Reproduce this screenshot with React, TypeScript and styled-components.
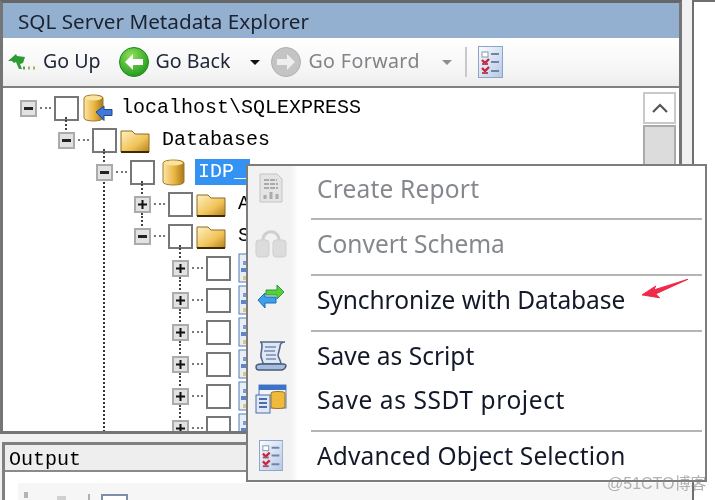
import React from "react";
import styled, { createGlobalStyle } from "styled-components";

const Global = createGlobalStyle`
  html, body { margin: 0; padding: 0; background: #f1f1f1; }
  #root { width: 715px; height: 500px; overflow: hidden; }
`;

const Page = styled.div`
  position: relative;
  width: 715px;
  height: 500px;
  overflow: hidden;
  display: flex;
  background: #f1f1f1;
  filter: blur(0.35px);
`;
const LeftColumn = styled.div`
  width: 682px;
  height: 500px;
  flex: none;
  display: flex;
  flex-direction: column;
`;
const RightPane = styled.div`
  margin-left: 10px;
  flex: 1;
  background: #fff;
  border-left: 2px solid #6f6f6f;
  border-top: 2px solid #6f6f6f;
`;
const ExplorerPanel = styled.section`
  height: 434px;
  box-sizing: border-box;
  flex: none;
  display: flex;
  flex-direction: column;
  border: 3px solid #757575;
  border-top-color: #666;
  overflow: hidden;
`;
const TitleBar = styled.header`
  height: 35px;
  flex: none;
  background: #94b0d0;
  display: flex;
  align-items: center;
  padding-left: 15px;
  font: 20.7px "Noto Sans", sans-serif;
  color: #1b2230;
`;
const Toolbar = styled.div`
  height: 50px;
  flex: none;
  box-sizing: border-box;
  display: flex;
  align-items: center;
  padding-left: 5px;
  background: linear-gradient(#ffffff, #f5f5f5 70%, #ececec);
  border-bottom: 2px solid #808080;
  font: 19.6px "Noto Sans", sans-serif;
`;
const ToolItem = styled.span<{ $off?: boolean; $gap: number; $ml?: number }>`
  display: inline-flex;
  align-items: center;
  gap: ${(p) => p.$gap}px;
  margin-left: ${(p) => p.$ml ?? 0}px;
  color: ${(p) => (p.$off ? "#808488" : "#20283a")};
  letter-spacing: ${(p) => (p.$off ? "0.4px" : "0")};
`;
const ToolLabel = styled.span`
  padding-bottom: 4px;
`;
const Caret = styled.i<{ $off?: boolean; $ml: number }>`
  width: 0;
  height: 0;
  margin-left: ${(p) => p.$ml}px;
  border-left: 5px solid transparent;
  border-right: 5px solid transparent;
  border-top: 5px solid ${(p) => (p.$off ? "#8a8f95" : "#111")};
`;
const ToolSep = styled.i`
  width: 2px;
  height: 30px;
  margin-left: 13px;
  margin-right: 11px;
  background: #c9c9c9;
`;
const TreeArea = styled.div`
  flex: 1;
  min-height: 0;
  display: flex;
  background: #fff;
  overflow: hidden;
`;
const Tree = styled.div`
  flex: 1;
  padding-top: 4px;
  overflow: hidden;
  position: relative;
`;
const Row = styled.div<{ $level: number }>`
  height: 32px;
  box-sizing: border-box;
  display: flex;
  align-items: center;
  padding-left: ${(p) => 17 + p.$level * 38}px;
`;
const Expander = styled.span<{ $line: number; $top?: boolean }>`
  position: relative;
  width: 17px;
  height: 17px;
  box-sizing: border-box;
  flex: none;
  background: #e2e2e2;
  border: 2px solid #ababab;
  display: flex;
  align-items: center;
  justify-content: center;
  &::before {
    content: "";
    display: ${(p) => (p.$top ? "block" : "none")};
    position: absolute;
    left: 5px;
    bottom: 17px;
    height: 13px;
    border-left: 2px dotted #444;
  }
  &::after {
    content: "";
    display: ${(p) => (p.$line ? "block" : "none")};
    position: absolute;
    left: 5px;
    top: 16px;
    height: ${(p) => p.$line}px;
    border-left: 2px dotted #333;
  }
`;
const Dots = styled.i`
  width: 11px;
  margin: 0 3px;
  flex: none;
  border-top: 2px dotted #777;
`;
const Check = styled.span`
  width: 25px;
  height: 25px;
  box-sizing: border-box;
  flex: none;
  background: #fff;
  border: 2px solid #777;
`;
const IconSlot = styled.span<{ $w: number; $ml: number }>`
  display: inline-flex;
  flex: none;
  width: ${(p) => p.$w}px;
  margin-left: ${(p) => p.$ml}px;
`;
const NodeLabel = styled.span<{ $selected?: boolean; $ml: number }>`
  margin-left: ${(p) => p.$ml}px;
  font: 20px/24px "Liberation Mono", monospace;
  color: ${(p) => (p.$selected ? "#fff" : "#000")};
  background: ${(p) => (p.$selected ? "#3492f2" : "transparent")};
  padding: ${(p) => (p.$selected ? "1px 4px 1px 3px" : "0")};
  white-space: pre;
`;
const Scrollbar = styled.div`
  width: 33px;
  flex: none;
  margin: 4px 3px 0 0;
  display: flex;
  flex-direction: column;
  gap: 1px;
`;
const ScrollUp = styled.div`
  height: 32px;
  box-sizing: border-box;
  background: #fff;
  border: 2px solid #c9c9c9;
  display: flex;
  align-items: center;
  justify-content: center;
`;
const ScrollThumb = styled.div`
  flex: 1;
  background: #dcdcdc;
  border: 2px solid #aaa;
  border-bottom: 0;
`;
const OutputPanel = styled.section`
  margin-top: 8px;
  flex: 1;
  margin-left: 2px;
  margin-right: -40px;
  border-top: 3px solid #808080;
  border-left: 3px solid #808080;
  display: flex;
  flex-direction: column;
  background: #fff;
`;
const OutputTitle = styled.div`
  height: 27px;
  box-sizing: border-box;
  flex: none;
  background: #eeeeee;
  border-bottom: 2px solid #8a8a8a;
  padding: 2px 0 0 4px;
  font: 20px/26px "Liberation Mono", monospace;
  color: #000;
`;
const OutputBody = styled.div`
  flex: 1;
  background: #fff;
  padding: 11px 0 0 13px;
  display: flex;
`;
const OutputStrip = styled.div`
  flex: 1;
  background: #f6f6f6;
  padding-left: 6px;
  display: flex;
  align-items: flex-start;
`;
const OutputSpeck = styled.i<{ $w: number; $ml: number; $top: number; $c: string }>`
  width: ${(p) => p.$w}px;
  height: 6px;
  margin: ${(p) => p.$top}px 0 0 ${(p) => p.$ml}px;
  background: ${(p) => p.$c};
  flex: none;
`;
const OutputBox = styled.i`
  width: 23px;
  height: 8px;
  margin: 11px 0 0 11px;
  flex: none;
  border: 2px solid #7f8fa8;
  border-bottom: 0;
  background: #fff;
`;
const Menu = styled.div`
  position: absolute;
  left: 246px;
  top: 164px;
  width: 461px;
  height: 318px;
  box-sizing: border-box;
  border: 2px solid #7c7c7c;
  background: linear-gradient(90deg, #f2f2f2 0, #f2f2f2 42px, #fff 50px);
  display: flex;
  flex-direction: column;
  font: 24.5px "Noto Sans", sans-serif;
`;
const MenuItem = styled.div<{ $h: number; $off?: boolean; $lift: number }>`
  height: ${(p) => p.$h}px;
  box-sizing: border-box;
  padding-bottom: ${(p) => p.$lift}px;
  flex: none;
  display: flex;
  align-items: center;
  color: ${(p) => (p.$off ? "#85898d" : "#14192a")};
  white-space: nowrap;
`;
const MenuIcon = styled.span`
  width: 46px;
  flex: none;
  display: flex;
  justify-content: center;
`;
const MenuText = styled.span<{ $track?: number }>`
  margin-left: 23px;
  letter-spacing: ${(p) => p.$track ?? 0}px;
`;
const MenuSep = styled.hr`
  margin: 0 3px 0 63px;
  border: 0;
  height: 2px;
  flex: none;
  background: #b4b4b4;
`;
const RedArrow = styled.svg`
  margin: 0 0 20px 17px;
  flex: none;
`;
const Watermark = styled.div`
  position: absolute;
  left: 607px;
  top: 470px;
  font: 16px "Liberation Sans", "Noto Sans CJK SC", sans-serif;
  color: rgba(130, 130, 130, 0.62);
  white-space: nowrap;
`;

const Minus = () => (
  <svg width="11" height="11" viewBox="0 0 11 11"><rect x="1" y="4" width="9" height="3" fill="#222" /></svg>
);
const Plus = () => (
  <svg width="11" height="11" viewBox="0 0 11 11"><path d="M1 4.5h3.5V1h2v3.5H10v2H6.5V10h-2V6.5H1z" fill="#111" /></svg>
);
const CylinderGradient = () => (
  <defs>
    <linearGradient id="cy" x1="0" x2="1" y1="0" y2="0">
      <stop offset="0" stopColor="#fbe6a8" />
      <stop offset=".55" stopColor="#e8b440" />
      <stop offset="1" stopColor="#a8781a" />
    </linearGradient>
  </defs>
);
const Server = () => (
  <svg width="30" height="28" viewBox="0 0 30 28">
    <CylinderGradient />
    <path d="M1 4c0-4 19-4 19 0v20c0 4-19 4-19 0z" fill="url(#cy)" stroke="#a27a26" />
    <ellipse cx="10.5" cy="4" rx="8.5" ry="2.6" fill="#f8e3a0" />
    <path d="M13 18l8-6v3.5h8v6h-8v5z" fill="#3f79d8" stroke="#23468c" />
  </svg>
);
const Database = () => (
  <svg width="23" height="27" viewBox="0 0 23 27">
    <CylinderGradient />
    <path d="M1 4c0-4 21-4 21 0v19c0 4-21 4-21 0z" fill="url(#cy)" stroke="#a27a26" />
    <ellipse cx="11.5" cy="4" rx="9.5" ry="2.6" fill="#f8e3a0" />
  </svg>
);
const Folder = () => (
  <svg width="30" height="25" viewBox="0 0 30 25">
    <defs>
      <linearGradient id="fo" x1="0" x2="1" y1="0" y2="1">
        <stop offset="0" stopColor="#fff0c0" />
        <stop offset=".6" stopColor="#f0c358" />
        <stop offset="1" stopColor="#b5801c" />
      </linearGradient>
    </defs>
    <path d="M1 3h11l3 3h14v18H1z" fill="url(#fo)" stroke="#8f6a1e" />
    <path d="M1 24h28" stroke="#3a2a08" strokeWidth="2" />
  </svg>
);
const TableIcon = () => (
  <svg width="26" height="30" viewBox="0 0 26 30">
    <rect x="1" y="1" width="24" height="28" fill="#e8eef8" stroke="#5578b8" />
    <rect x="5" y="8" width="18" height="4" fill="#7c9ad4" />
    <rect x="3" y="15" width="18" height="4" fill="#5f85c6" />
    <rect x="5" y="23" width="18" height="4" fill="#d8c878" />
  </svg>
);
const UpArrow = () => (
  <svg width="29" height="18" viewBox="0 0 29 18">
    <path d="M0 8l8-7 1 2 8 1-2 6-3 1 2 5h-3l-3-7-2 1-2-2z" fill="#2c9c30" />
    <path d="M15 15h2" stroke="#5b9c3c" strokeWidth="3" />
    <path d="M20 15h2M25 15h2" stroke="#9ab860" strokeWidth="3" />
  </svg>
);
const Circle = ({ dir, off }: { dir: "l" | "r"; off?: boolean }) => (
  <svg width="30" height="30" viewBox="0 0 30 30">
    <defs>
      <radialGradient id="gr" cx=".4" cy=".3" r=".8">
        <stop offset="0" stopColor="#8fe05a" />
        <stop offset="1" stopColor="#169316" />
      </radialGradient>
    </defs>
    <circle cx="15" cy="15" r="14.5" fill={off ? "#c4c4c4" : "url(#gr)"} stroke={off ? "#b0b0b0" : "#1a8a1a"} />
    <path
      d={dir === "l" ? "M6 15l8-8v5h10v6H14v5z" : "M24 15l-8-8v5H6v6h10v5z"}
      fill={off ? "#eee" : "#fff"}
    />
  </svg>
);
const CheckList = ({ h = 32 }: { h?: number }) => (
  <svg width={(h * 25) / 32} height={h} viewBox="0 0 25 32">
    <defs>
      <linearGradient id="cl" x1="0" x2="1" y1="0" y2="1">
        <stop offset="0" stopColor="#fafcff" />
        <stop offset="1" stopColor="#b6c8e6" />
      </linearGradient>
    </defs>
    <rect x=".5" y=".5" width="24" height="31" fill="url(#cl)" stroke="#8ea4c6" />
    <rect x="4" y="6" width="6" height="5" fill="#fff" stroke="#8899aa" />
    <path d="M13 8h8M13 16h8M13 25h8" stroke="#6d86a8" strokeWidth="2" />
    <path d="M4 14l3 3 4-4M4 22l3 3 4-4" stroke="#c8243c" strokeWidth="2.4" fill="none" />
    <rect x="4" y="17" width="6" height="2" fill="#b14c60" />
    <rect x="4" y="26" width="6" height="2" fill="#b14c60" />
  </svg>
);
const ReportIcon = () => (
  <svg width="24" height="30" viewBox="0 0 24 30">
    <path d="M1 1h17l5 5v23H1z" fill="#e4e4e4" stroke="#c4c4c4" />
    <path d="M5 7h13M5 11h14M5 15h14" stroke="#aaa" strokeWidth="2" strokeDasharray="5 1" />
    <path d="M6 26v-4M12 26v-7M18 26v-5" stroke="#aaa" strokeWidth="3" />
  </svg>
);
const SchemaIcon = () => (
  <svg width="32" height="30" viewBox="0 0 32 30">
    <path d="M8 12C8 1 24 1 24 12" fill="none" stroke="#cfcfcf" strokeWidth="3" />
    <rect x="1" y="12" width="13" height="17" rx="3" fill="#dcdcdc" stroke="#cfcfcf" />
    <rect x="18" y="12" width="13" height="17" rx="3" fill="#dcdcdc" stroke="#cfcfcf" />
  </svg>
);
const SyncIcon = () => (
  <svg width="28" height="28" viewBox="0 0 28 28">
    <path d="M9 5h11V0l7 7-7 7v-4H9z" fill="#55cf3a" stroke="#2f9a3a" />
    <path d="M19 12H8V8l-7 7 7 8v-5h11z" fill="#3da0e8" stroke="#1c6cb4" />
  </svg>
);
const ScrollIcon = () => (
  <svg width="32" height="32" viewBox="0 0 32 32">
    <path d="M5 3h25c-3 0-5 2-5 5l-2 8c0 3 3 5 3 9H8c0-4-3-6-2-10l1-7c0-3 0-5-2-5z" fill="#dfe7f4" stroke="#56698c" strokeWidth="1.6" />
    <path d="M10 8h11M9 12h11M11 16h10M11 20h10" stroke="#8ea2c4" strokeWidth="2" />
    <path d="M1 28c0-2 2-3 5-3h22c2 0 3 1 3 2-1 3-3 4-5 4H4c-2 0-3-1-3-3z" fill="#a6bedd" stroke="#47597a" strokeWidth="1.4" />
  </svg>
);
const SsdtIcon = () => (
  <svg width="32" height="30" viewBox="0 0 32 30">
    <rect x="4" y="1" width="27" height="23" fill="#f2f4fa" stroke="#5b7bb8" />
    <rect x="4" y="1" width="27" height="5" fill="#3c72c8" />
    <path d="M16 9c0-2 14-2 14 0v14c0 2-14 2-14 0z" fill="#efb93c" stroke="#9a7418" />
    <rect x="1" y="11" width="14" height="18" fill="#dfe8f6" stroke="#4d6da6" />
    <path d="M4 15h8M4 19h8M4 23h8" stroke="#4d6da6" strokeWidth="2" />
  </svg>
);

type Node = {
  level: number;
  open: boolean;
  label?: string;
  selected?: boolean;
  icon: "server" | "db" | "folder" | "table";
  line?: number;
};
const nodes: Node[] = [
  { level: 0, open: true, icon: "server", label: "localhost\\SQLEXPRESS" },
  { level: 1, open: true, icon: "folder", label: "Databases" },
  { level: 2, open: true, icon: "db", label: "IDP_", selected: true, line: 270 },
  { level: 3, open: false, icon: "folder", label: "A" },
  { level: 3, open: true, icon: "folder", label: "S" },
  { level: 4, open: false, icon: "table" },
  { level: 4, open: false, icon: "table" },
  { level: 4, open: false, icon: "table" },
  { level: 4, open: false, icon: "table" },
  { level: 4, open: false, icon: "table" },
  { level: 4, open: false, icon: "table" },
];

const TreeNode = ({ n }: { n: Node }) => (
  <Row $level={n.level}>
    <Expander $line={n.line ?? 0} $top={n.level > 0}>
      {n.open ? <Minus /> : <Plus />}
    </Expander>
    <Dots />
    <Check />
    {n.icon === "server" && <IconSlot $w={30} $ml={4}><Server /></IconSlot>}
    {n.icon === "db" && <IconSlot $w={23} $ml={7}><Database /></IconSlot>}
    {n.icon === "folder" && <IconSlot $w={30} $ml={3}><Folder /></IconSlot>}
    {n.icon === "table" && <IconSlot $w={26} $ml={7}><TableIcon /></IconSlot>}
    {n.label && (
      <NodeLabel $selected={n.selected} $ml={n.selected ? 10 : n.icon === "server" ? 8 : 12}>
        {n.label}
      </NodeLabel>
    )}
  </Row>
);

export default function App() {
  return (
    <>
      <Global />
      <Page>
        <LeftColumn>
          <ExplorerPanel>
            <TitleBar>SQL Server Metadata Explorer</TitleBar>
            <Toolbar>
              <ToolItem $gap={6}><UpArrow /><ToolLabel>Go Up</ToolLabel></ToolItem>
              <ToolItem $gap={7} $ml={18}><Circle dir="l" /><ToolLabel>Go Back</ToolLabel></ToolItem>
              <Caret $ml={20} />
              <ToolItem $off $gap={7} $ml={11}><Circle dir="r" off /><ToolLabel>Go Forward</ToolLabel></ToolItem>
              <Caret $off $ml={22} />
              <ToolSep />
              <CheckList />
            </Toolbar>
            <TreeArea>
              <Tree>
                {nodes.map((n, i) => (
                  <TreeNode key={i} n={n} />
                ))}
              </Tree>
              <Scrollbar>
                <ScrollUp>
                  <svg width="16" height="10" viewBox="0 0 16 10">
                    <path d="M1 9l7-7 7 7" fill="none" stroke="#555" strokeWidth="2.2" />
                  </svg>
                </ScrollUp>
                <ScrollThumb />
              </Scrollbar>
            </TreeArea>
          </ExplorerPanel>
          <OutputPanel>
            <OutputTitle>Output</OutputTitle>
            <OutputBody>
              <OutputStrip>
                <OutputSpeck $w={4} $ml={0} $top={9} $c="#b4b4b4" />
                <OutputSpeck $w={9} $ml={29} $top={13} $c="#d0d0d0" />
                <OutputSpeck $w={2} $ml={22} $top={11} $c="#b0b0b0" />
                <OutputBox />
              </OutputStrip>
            </OutputBody>
          </OutputPanel>
        </LeftColumn>
        <RightPane />
        <Menu>
          <MenuItem $h={52} $lift={8} $off><MenuIcon><ReportIcon /></MenuIcon><MenuText $track={0.2}>Create Report</MenuText></MenuItem>
          <MenuSep />
          <MenuItem $h={54} $lift={8} $off><MenuIcon><SchemaIcon /></MenuIcon><MenuText>Convert Schema</MenuText></MenuItem>
          <MenuSep />
          <MenuItem $h={54} $lift={8}>
            <MenuIcon><SyncIcon /></MenuIcon>
            <MenuText $track={-0.08}>Synchronize with Database</MenuText>
            <RedArrow width="47" height="20" viewBox="0 0 48 20">
              <path d="M0 16l14-9-2 4L47 0 14 15l4 4z" fill="#f0284a" stroke="#f0284a" strokeWidth="1" />
            </RedArrow>
          </MenuItem>
          <MenuSep />
          <MenuItem $h={46} $lift={0}><MenuIcon><ScrollIcon /></MenuIcon><MenuText>Save as Script</MenuText></MenuItem>
          <MenuItem $h={52} $lift={10}><MenuIcon><SsdtIcon /></MenuIcon><MenuText $track={0.6}>Save as SSDT project</MenuText></MenuItem>
          <MenuSep />
          <MenuItem $h={50} $lift={4}><MenuIcon><CheckList h={31} /></MenuIcon><MenuText $track={0.15}>Advanced Object Selection</MenuText></MenuItem>
        </Menu>
        <Watermark>@51CTO博客</Watermark>
      </Page>
    </>
  );
}
